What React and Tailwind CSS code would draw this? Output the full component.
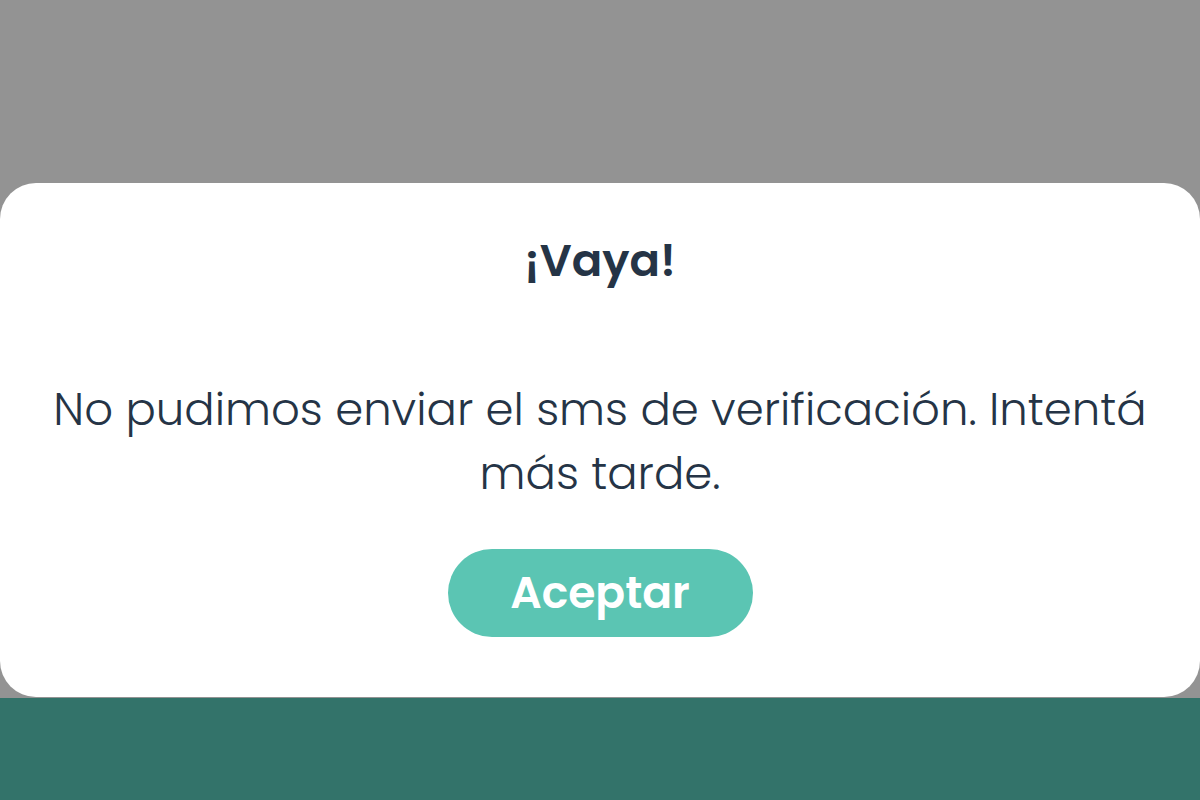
export default function App() {
  return (
    <div className="w-[1200px] h-[800px] flex flex-col overflow-hidden" style={{ fontFamily: "Poppins, Lato, 'Noto Sans', sans-serif" }}>
      <div className="h-[698px] bg-[#939393] pt-[183px]">
        <div className="h-[514px] bg-white rounded-[36px] flex flex-col items-center text-[#253446]">
          <h1 className="mt-[48px] h-[60px] leading-[60px] text-[45px] font-semibold">¡Vaya!</h1>
          <p className="mt-[87px] w-[1120px] text-center text-[45px] font-light leading-[64px]">
            No pudimos enviar el sms de verificación. Intentá más tarde.
          </p>
          <button className="mt-[43px] w-[305px] h-[88px] rounded-full bg-[#5bc5b3] text-white text-[44px] font-semibold">
            Aceptar
          </button>
        </div>
      </div>
      <div className="flex-1 bg-[#33736a]" />
    </div>
  );
}
